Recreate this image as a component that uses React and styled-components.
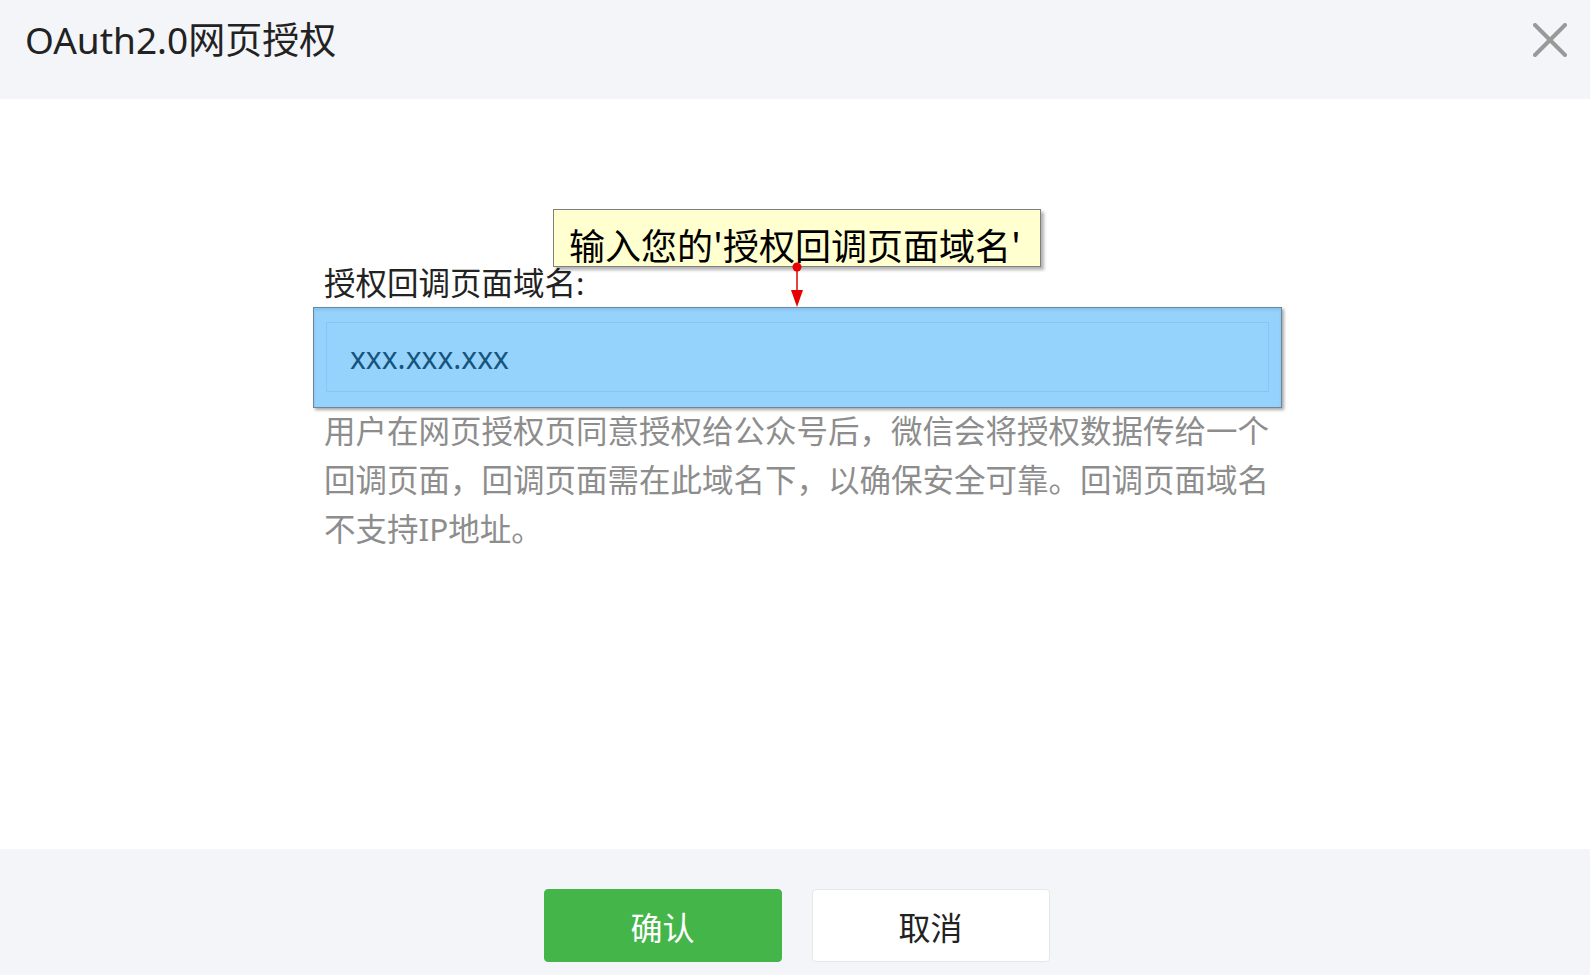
import React from "react";
import styled, { createGlobalStyle } from "styled-components";

const GlobalStyle = createGlobalStyle`
  html, body {
    margin: 0;
    padding: 0;
    background: #ffffff;
  }
  body {
    font-family: "Noto Sans", "Noto Sans CJK SC", sans-serif;
    color: #222;
  }
  * {
    box-sizing: border-box;
  }
`;

const Dialog = styled.div`
  width: 1590px;
  height: 975px;
  display: flex;
  flex-direction: column;
  overflow: hidden;
`;

const Header = styled.div`
  height: 99px;
  flex-shrink: 0;
  background: #f4f5f9;
  display: flex;
  align-items: flex-start;
  justify-content: space-between;
  padding: 14px 23px 0 25px;
`;

const Title = styled.h3`
  margin: 0;
  font-size: 37px;
  line-height: 52px;
  font-weight: 400;
  color: #222;
`;

const CloseBtn = styled.button`
  border: none;
  background: transparent;
  padding: 0;
  margin-top: 9px;
  width: 34px;
  height: 34px;
  cursor: pointer;
  display: flex;
  svg {
    display: block;
  }
`;

const Body = styled.div`
  flex: 1;
  background: #fff;
  display: flex;
  justify-content: center;
  padding: 162px 0 0 4px;
`;

const Form = styled.div`
  position: relative;
  width: 946px;
`;

const Label = styled.label`
  display: block;
  font-size: 31.5px;
  line-height: 44px;
  color: #222;
  margin-bottom: 17px;
`;

const InputWrap = styled.div`
  position: relative;
`;

const Input = styled.input`
  display: block;
  width: 943px;
  height: 70px;
  margin-left: 2px;
  border: 1px solid #e7e7eb;
  background: #fff;
  padding: 0 23px;
  font-family: "Noto Sans", sans-serif;
  font-size: 30px;
  color: #2a2a2a;
  outline: none;
`;

const Highlight = styled.div`
  position: absolute;
  left: -11px;
  right: -12px;
  top: -15px;
  bottom: -16px;
  background: rgba(0, 148, 247, 0.41);
  border: 1px solid #6f8799;
  box-shadow: 2px 2px 3px rgba(0, 0, 0, 0.35), inset 0 2px 3px rgba(0, 60, 120, 0.12);
  pointer-events: none;
`;

const Desc = styled.p`
  margin: 14px 0 0;
  font-size: 31.5px;
  line-height: 49px;
  color: #8d8d8d;
`;

const Tip = styled.div`
  position: absolute;
  left: 229px;
  top: -52px;
  height: 58px;
  padding: 16px 19px 0 15px;
  background: #ffffd0;
  border: 1px solid #7f7f7f;
  box-shadow: 3px 3px 3px rgba(0, 0, 0, 0.3);
  font-family: "Noto Sans CJK SC", sans-serif;
  font-size: 36px;
  line-height: 36px;
  color: #000;
  white-space: nowrap;
  z-index: 2;
`;

const Pointer = styled.svg`
  position: absolute;
  left: 466px;
  top: 1px;
  z-index: 3;
  overflow: visible;
`;

const Footer = styled.div`
  height: 126px;
  flex-shrink: 0;
  background: #f4f5f9;
  display: flex;
  justify-content: center;
  align-items: flex-start;
  gap: 30px;
  padding: 40px 0 0 3px;
`;

const Button = styled.button`
  width: 238px;
  height: 73px;
  border-radius: 4px;
  font-family: "Noto Sans CJK SC", sans-serif;
  font-size: 32px;
  cursor: pointer;
  border: 1px solid ${(p) => (p.primary ? "#44b549" : "#e4e8eb")};
  background: ${(p) => (p.primary ? "#44b549" : "#fff")};
  color: ${(p) => (p.primary ? "#fff" : "#222")};
`;

const CloseIcon = () => (
  <svg width="34" height="34" viewBox="0 0 34 34">
    <path d="M2 2 L32 32 M32 2 L2 32" stroke="#999" strokeWidth="4" strokeLinecap="round" />
  </svg>
);

export default function App() {
  return (
    <>
      <GlobalStyle />
      <Dialog>
        <Header>
          <Title>OAuth2.0网页授权</Title>
          <CloseBtn aria-label="关闭">
            <CloseIcon />
          </CloseBtn>
        </Header>
        <Body>
          <Form>
            <Label>授权回调页面域名:</Label>
            <InputWrap>
              <Input defaultValue="xxx.xxx.xxx" />
              <Highlight />
            </InputWrap>
            <Desc>
              用户在网页授权页同意授权给公众号后，微信会将授权数据传给一个回调页面，回调页面需在此域名下，以确保安全可靠。回调页面域名不支持IP地址。
            </Desc>
            <Tip>输入您的'授权回调页面域名'</Tip>
            <Pointer width="14" height="46" viewBox="0 0 14 46">
              <line x1="7" y1="5" x2="7" y2="30" stroke="#e60000" strokeWidth="1.5" />
              <circle cx="7" cy="5" r="4.5" fill="#e60000" />
              <polygon points="1,28 13,28 7,45" fill="#e60000" />
            </Pointer>
          </Form>
        </Body>
        <Footer>
          <Button primary>确认</Button>
          <Button>取消</Button>
        </Footer>
      </Dialog>
    </>
  );
}
